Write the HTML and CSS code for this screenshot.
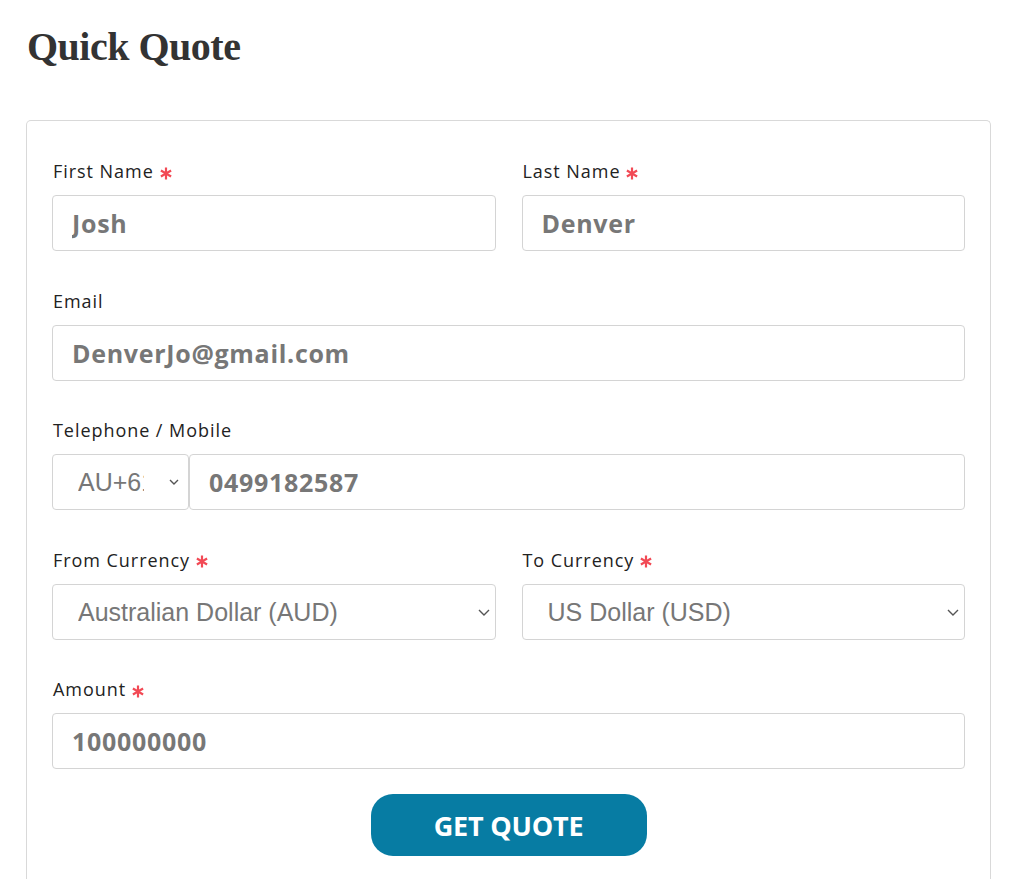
FILE: index.html
```html
<!DOCTYPE html>
<html>
<head>
<meta charset="utf-8">
<link rel="stylesheet" href="styles.css">
</head>
<body>
<div class="page">
  <h1 class="title">Quick Quote</h1>
  <form class="card">
    <div class="row two">
      <div class="group">
        <label class="label">First Name <svg class="req" width="12" height="13" viewBox="0 0 12 13"><path d="M6 0.5v12M0.9 3.5l10.2 6M0.9 9.5l10.2-6" stroke="#f24a55" stroke-width="2.2"/></svg></label>
        <input class="field" type="text" value="Josh">
      </div>
      <div class="group">
        <label class="label">Last Name <svg class="req" width="12" height="13" viewBox="0 0 12 13"><path d="M6 0.5v12M0.9 3.5l10.2 6M0.9 9.5l10.2-6" stroke="#f24a55" stroke-width="2.2"/></svg></label>
        <input class="field" type="text" value="Denver">
      </div>
    </div>
    <div class="group">
      <label class="label">Email</label>
      <input class="field" type="text" value="DenverJo@gmail.com">
    </div>
    <div class="group">
      <label class="label">Telephone / Mobile</label>
      <div class="phone">
        <div class="select-wrap code">
          <select class="select"><option>AU+61</option></select>
          <svg class="chev" width="10" height="6" viewBox="0 0 10 6"><path d="M1 1l4 4 4-4" fill="none" stroke="#555" stroke-width="1.4"/></svg>
        </div>
        <input class="field grow" type="text" value="0499182587">
      </div>
    </div>
    <div class="row two">
      <div class="group">
        <label class="label">From Currency <svg class="req" width="12" height="13" viewBox="0 0 12 13"><path d="M6 0.5v12M0.9 3.5l10.2 6M0.9 9.5l10.2-6" stroke="#f24a55" stroke-width="2.2"/></svg></label>
        <div class="select-wrap">
          <select class="select"><option>Australian Dollar (AUD)</option></select>
          <svg class="chev" width="12" height="7" viewBox="0 0 12 7"><path d="M1 1l5 5 5-5" fill="none" stroke="#555" stroke-width="1.4"/></svg>
        </div>
      </div>
      <div class="group">
        <label class="label">To Currency <svg class="req" width="12" height="13" viewBox="0 0 12 13"><path d="M6 0.5v12M0.9 3.5l10.2 6M0.9 9.5l10.2-6" stroke="#f24a55" stroke-width="2.2"/></svg></label>
        <div class="select-wrap">
          <select class="select"><option>US Dollar (USD)</option></select>
          <svg class="chev" width="12" height="7" viewBox="0 0 12 7"><path d="M1 1l5 5 5-5" fill="none" stroke="#555" stroke-width="1.4"/></svg>
        </div>
      </div>
    </div>
    <div class="group last">
      <label class="label">Amount <svg class="req" width="12" height="13" viewBox="0 0 12 13"><path d="M6 0.5v12M0.9 3.5l10.2 6M0.9 9.5l10.2-6" stroke="#f24a55" stroke-width="2.2"/></svg></label>
      <input class="field" type="text" value="100000000">
    </div>
    <div class="actions">
      <button class="btn" type="button">GET QUOTE</button>
    </div>
  </form>
</div>
</body>
</html>
```

FILE: styles.css
```css
* { box-sizing: border-box; }
html, body { margin: 0; padding: 0; background: #fff; }
body { font-family: "Open Sans", "Noto Sans", sans-serif; color: #222; }
.page { padding: 20px 21px 0 26px; }
.title {
  margin: 0 0 0 1px;
  font-family: "Liberation Serif", serif;
  font-weight: 700;
  font-size: 40px;
  line-height: 54px;
  color: #333;
  letter-spacing: -0.5px;
}
.card {
  margin-top: 46px;
  border: 1px solid #d9d9d9;
  border-bottom: none;
  border-radius: 5px 5px 0 0;
  padding: 38px 25px 40px 25px;
  height: 800px;
}
.row.two { display: grid; grid-template-columns: 1fr 1fr; column-gap: 26px; }
.group { display: flex; flex-direction: column; margin-bottom: 37.5px; }
.group.last { margin-bottom: 25px; }
.label {
  display: flex;
  align-items: center;
  gap: 6px;
  font-size: 18px;
  letter-spacing: 0.95px;
  line-height: 24px;
  height: 24px;
  margin-bottom: 12px;
  color: #222;
  padding-left: 1px;
}
.req { flex: none; position: relative; top: 2px; }
.field {
  height: 56px;
  width: 100%;
  border: 1px solid #d4d4d4;
  border-radius: 4px;
  padding: 0 19px;
  font-family: "Open Sans", sans-serif;
  font-weight: 700;
  font-size: 25px;
  letter-spacing: 0.7px;
  color: #777;
  outline: none;
  background: #fff;
}
.phone { display: flex; }
.grow { flex: 1; width: auto; }
.select-wrap { position: relative; }
.select-wrap.code { width: 137px; flex: none; }
.select {
  appearance: none;
  -webkit-appearance: none;
  width: 100%;
  height: 56px;
  border: 1px solid #d4d4d4;
  border-radius: 4px;
  background: #fff;
  padding: 0 40px 0 25px;
  font-family: "Liberation Sans", Arial, sans-serif;
  font-size: 25px;
  color: #777;
  outline: none;
}
.select-wrap.code .select { padding-right: 44px; }
.chev { position: absolute; top: 25px; }
.select-wrap.code .chev { right: 10px; }
.select-wrap:not(.code) .chev { right: 6px; }
.actions { display: flex; justify-content: center; }
.btn {
  width: 276px;
  height: 62px;
  border: none;
  border-radius: 22px;
  background: #077ca3;
  color: #fff;
  font-family: "Open Sans", sans-serif;
  font-weight: 700;
  font-size: 27px;
  letter-spacing: -0.2px;
}
```
